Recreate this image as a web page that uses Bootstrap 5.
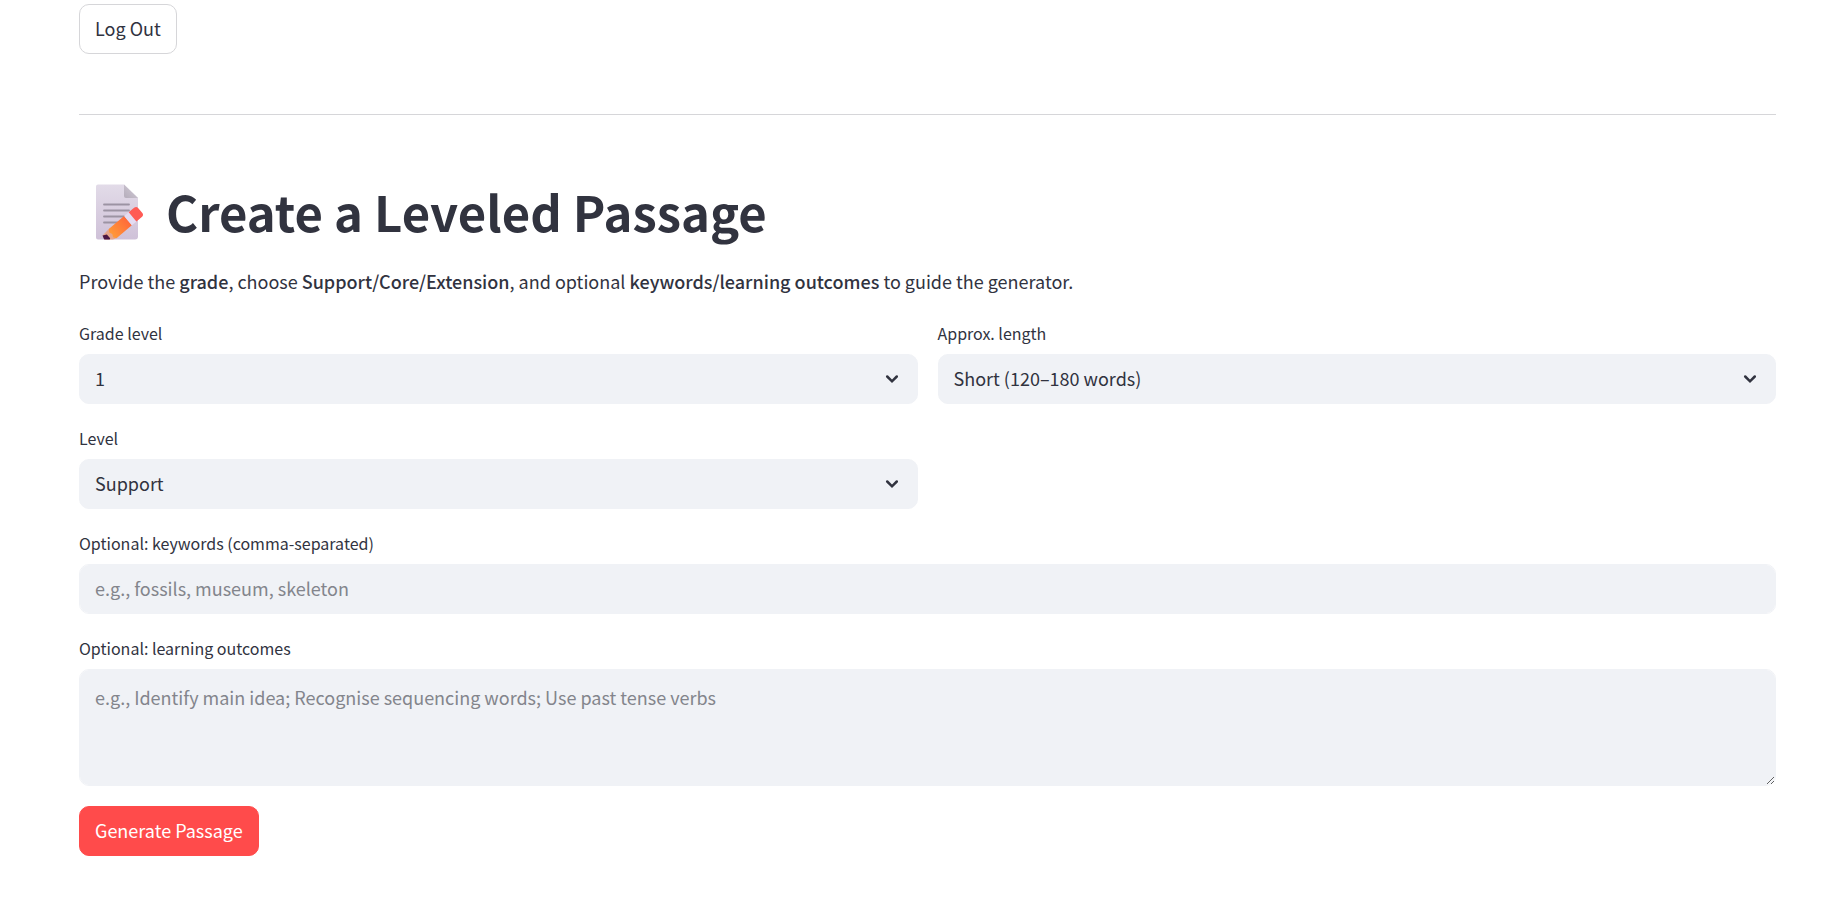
<!DOCTYPE html>
<html lang="en">
<head>
<meta charset="utf-8">
<meta name="viewport" content="width=device-width, initial-scale=1">
<title>Create a Leveled Passage</title>
<link href="https://cdn.jsdelivr.net/npm/bootstrap@5.3.0/dist/css/bootstrap.min.css" rel="stylesheet">
<style>
  :root { --ink: #31333f; --field: #f0f2f6; --accent: #ff4b4b; }
  body {
    font-family: "Noto Sans CJK SC", "Noto Sans", sans-serif;
    font-size: 18px; line-height: 32px; color: var(--ink); background: #fff;
  }
  .page { padding: 4px 67px 40px 79px; }
  .btn {
    font-size: 18px; line-height: 32px; padding: 7px 15px 9px; border-radius: 10px;
  }
  .btn-plain { color: var(--ink); border-color: #d6d6d9; background: #fff; }
  .btn-plain:hover { color: var(--accent); border-color: var(--accent); }
  .btn-accent, .btn-accent:hover { color: #fff; background: var(--accent); border-color: var(--accent); }
  .rule { margin: 60px 0; border-color: #d6d6d9; opacity: 1; }
  .title { font-size: 49px; line-height: 64px; font-weight: 700; color: var(--ink); padding: 4px 0 22px 17px; gap: 22px; }
  .title svg { width: 48px; height: 56px; flex: none; margin-top: 5px; }
  .intro { margin-bottom: 22px; }
  .intro strong { font-weight: 500; }
  .form-label { font-size: 16px; line-height: 25px; margin-bottom: 8px; padding-top: 2px; display: block; }
  .field-row { --bs-gutter-x: 20px; --bs-gutter-y: 20px; }
  .form-control, .form-select {
    font-size: 18px; line-height: 32px; color: var(--ink);
    background-color: var(--field); border: 1px solid var(--field);
    border-radius: 10px; padding: 7px 15px 9px;
  }
  .form-select {
    background-image: url("data:image/svg+xml,%3Csvg xmlns='http://www.w3.org/2000/svg' viewBox='0 0 14 10'%3E%3Cpath d='M2.200 2.500l4.800 4.800 4.800-4.800' fill='none' stroke='%2331333f' stroke-width='2.500' stroke-linecap='round'/%3E%3C/svg%3E");
    background-size: 14px 10px; background-position: right 18px center;
  }
  .form-control:focus, .form-select:focus { background-color: var(--field); border-color: var(--accent); box-shadow: none; }
  .form-control::placeholder { color: #83858c; opacity: 1; }
  textarea.form-control { height: 117px; padding-top: 11px; }
</style>
</head>
<body>
<main class="page">
  <button type="button" class="btn btn-plain">Log Out</button>
  <hr class="rule">

  <h1 class="title d-flex align-items-start mb-0">
    <svg viewBox="0 0 48 56" aria-hidden="true">
      <defs>
        <linearGradient id="paper" x1="0" y1="0" x2="0" y2="1"><stop offset="0" stop-color="#e2dbe8"/><stop offset="1" stop-color="#cfc1d8"/></linearGradient>
        <linearGradient id="fold" x1="0" y1="1" x2="1" y2="0"><stop offset="0" stop-color="#b5adbb"/><stop offset="1" stop-color="#d4cdd8"/></linearGradient>
        <linearGradient id="wood" x1="0" y1="0" x2="1" y2="0"><stop offset="0" stop-color="#ff9a38"/><stop offset="1" stop-color="#ff6a3a"/></linearGradient>
        <clipPath id="sheet"><path d="M0 0h48v55.500H0z"/></clipPath>
      </defs>
      <path d="M2 .5h26L42 14v38.500a3 3 0 0 1-3 3H2a2 2 0 0 1-2-2v-51a2 2 0 0 1 2-2z" fill="url(#paper)"/>
      <path d="M28 .5 42 14H30a2 2 0 0 1-2-2z" fill="url(#fold)"/>
      <path d="M8 20.500h25M8 26.500h25M8 32.500h20M8 38.500h14" stroke="#9c93a3" stroke-width="1.800" stroke-linecap="round"/>
      <g clip-path="url(#sheet)">
        <g transform="translate(9 56) rotate(-40)">
          <path d="M0 0 1-5 11-6v12L1 4z" fill="#e5a58b"/>
          <path d="M-1 1 1-5 5-3v5L1 5z" fill="#4b1743"/>
          <path d="M10-6h20V6H10l-2-3 1.500-3L8-3z" fill="url(#wood)"/>
          <path d="M30-6h6V6h-6z" fill="#e4dcf2"/>
          <path d="M36-6h7a3 3 0 0 1 3 3v6a3 3 0 0 1-3 3h-7z" fill="#ff5b55"/>
        </g>
      </g>
    </svg>
    <span>Create a Leveled Passage</span>
  </h1>

  <p class="intro">Provide the <strong>grade</strong>, choose <strong>Support/Core/Extension</strong>, and optional <strong>keywords/learning outcomes</strong> to guide the generator.</p>

  <form>
    <div class="row field-row">
      <div class="col-6">
        <label class="form-label" for="grade">Grade level</label>
        <select class="form-select" id="grade"><option>1</option><option>2</option><option>3</option></select>
      </div>
      <div class="col-6">
        <label class="form-label" for="length">Approx. length</label>
        <select class="form-select" id="length"><option>Short (120–180 words)</option></select>
      </div>
      <div class="col-6">
        <label class="form-label" for="level">Level</label>
        <select class="form-select" id="level"><option>Support</option><option>Core</option><option>Extension</option></select>
      </div>
      <div class="col-12">
        <label class="form-label" for="keywords">Optional: keywords (comma-separated)</label>
        <input type="text" class="form-control" id="keywords" placeholder="e.g., fossils, museum, skeleton">
      </div>
      <div class="col-12">
        <label class="form-label" for="outcomes">Optional: learning outcomes</label>
        <textarea class="form-control" id="outcomes" placeholder="e.g., Identify main idea; Recognise sequencing words; Use past tense verbs"></textarea>
      </div>
      <div class="col-12">
        <button type="submit" class="btn btn-accent">Generate Passage</button>
      </div>
    </div>
  </form>
</main>
<script src="https://cdn.jsdelivr.net/npm/bootstrap@5.3.0/dist/js/bootstrap.bundle.min.js"></script>
</body>
</html>
